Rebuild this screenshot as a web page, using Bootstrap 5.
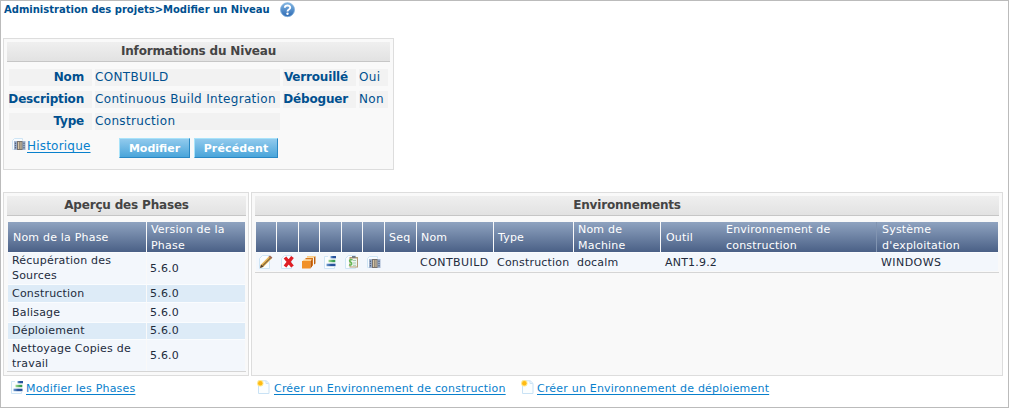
<!DOCTYPE html>
<html lang="fr">
<head>
<meta charset="utf-8">
<title>Administration des projets</title>
<link rel="stylesheet" href="https://cdn.jsdelivr.net/npm/bootstrap@5.3.0/dist/css/bootstrap.min.css">
<style>
body{font-family:Verdana,"DejaVu Sans",sans-serif;font-size:11px;line-height:15px;color:#222b3c;background:#fff;overflow:hidden}
.page{width:1009px;height:408px;border:1px solid #bbb;padding:0 5px 0 2px}
.crumb{height:37px;color:#00508f;font-weight:700;font-size:10px;line-height:17px;padding-left:1px}
.crumb svg{margin:1px 0 0 11px}
.c1{width:265px;white-space:nowrap}
.panel{background:#f9f9f9;border:1px solid #ddd;padding:3px}
.panel-title{height:20px;border-bottom:1px solid #c6c6c6;background:linear-gradient(#efefef,#e2e2e2);color:#444;font-size:12px;font-weight:700;line-height:18px;letter-spacing:-.18px;text-align:center;margin:0}
.info{width:391px;height:132px}
.fields{display:grid;grid-template-columns:83px 185px 73px 29px;column-gap:3px;row-gap:5px;margin:7px 0 0 2px;font-size:12px;line-height:16px;color:#00508f}
.fields>*{background:#f2f2f2;height:17px;margin:0;white-space:nowrap}
.fields dd{letter-spacing:.33px}
.fields dt{padding-right:8px;display:flex;justify-content:flex-end;letter-spacing:-.18px}
.actions{margin:8px 0 0 5px}
.lnk{color:#0880cc;text-decoration:underline;text-underline-offset:2px;white-space:nowrap;letter-spacing:.2px}
.hist{font-size:12px;width:92px;margin-left:1px;line-height:17px}
.btn-act{height:20px;border-radius:0;border:1px solid;border-color:#a9e3fa #2a88c4 #2a88c4 #a9e3fa;background:linear-gradient(#91caed,#4aa5da);color:#fff;font-size:11px;font-weight:700;line-height:17px;padding:0;text-align:center}
.b1{width:71px;margin-right:4px}
.b2{width:84px;letter-spacing:.15px}
.boxes{margin-top:22px;gap:2px;height:184px}
.phases{width:246px;padding-right:2px}
.envs{width:752px}
.grid-tbl{table-layout:fixed;border-collapse:separate;border-spacing:0;margin:6px 1px 0;letter-spacing:.2px}
.pt{width:237px}
.et{width:742px}
.grid-tbl th{font-weight:400;color:#fff;height:30px;line-height:16px;padding:2px 0 0 4px;background:linear-gradient(#8fa3c0,#4a6086);border-right:1px solid #f9f9f9;white-space:nowrap;vertical-align:middle}
.grid-tbl th div{margin:-2px 0}
.grid-tbl td{padding:0 0 0 3px;background:#f3f7fc;border-right:1px solid #f9f9f9;border-top:1px solid #fafcfe;white-space:nowrap;vertical-align:middle}
.grid-tbl th.pad{padding-left:5px}
.grid-tbl td.pad{padding-left:4px}
.grid-tbl th:last-child,.grid-tbl td:last-child{border-right:0}
.grid-tbl .alt td{background:#ddebf7}
.grid-tbl th.open{border-right:0}
.grid-tbl th.faint{border-right-color:#8194b1}
.grid-tbl .plain td{border-right-color:#f3f7fc;border-bottom:1px solid #f9f9f9}
.caps{letter-spacing:.45px}
.up{position:relative;top:-1px}
.rule{height:1px;background:#d5d5d5}
.foot{padding:4px 0 0 8px;line-height:17px}
.foot .lnk{padding-top:0}
.l1{width:231px;margin-left:1px}
.l2{width:247px;margin-left:3px}
.l3{margin-left:2px}
svg{display:block;flex:none}
</style>
</head>
<body>
<svg width="0" height="0" class="position-absolute" aria-hidden="true"><defs>
<linearGradient id="gb" x2="0" y2="1"><stop stop-color="#80b6e4"/><stop offset="1" stop-color="#2d69b3"/></linearGradient>
<linearGradient id="gk" x2="1" y2="0"><stop stop-color="#6f9dd0"/><stop offset=".5" stop-color="#28539c"/></linearGradient>
<linearGradient id="gg" x2="1" y2="0"><stop stop-color="#a5dc92"/><stop offset=".7" stop-color="#3a9e55"/></linearGradient>
<symbol id="sheet" viewBox="0 0 14 14"><path d="M3.500.5h7v13H.5v-10z" fill="#fafdff" stroke="#cfe5f5"/></symbol>
<symbol id="film" viewBox="0 0 14 14"><path d="M.5 11.500V2.500l2-2h8v2M.5 11.500H3" fill="#f8fcff" stroke="#cfe5f5"/><path d="M2 3h11.500v9H2z" fill="#a3b5d0"/><path d="M3.500 4.500v6M12 4.500v6" stroke="#56657f" stroke-width="1.300" stroke-dasharray="1.500 .7"/><path d="M5 3h5.500v9H5z" fill="#77726e"/><path d="M6 4h1.300v7H6zM8.400 4h1.100v7H8.400z" fill="#d8c6a5"/></symbol>
<symbol id="steps" viewBox="0 0 14 14"><path d="M4 1.500H.5v12h10V12" fill="#fafdff" stroke="#cfe5f5"/><path d="M6.500 1h5.500v2.300H6.500z" fill="url(#gk)"/><path d="M4.500 4.800h6.800v2.400H4.500z" fill="url(#gg)"/><path d="M2.500 8.700h9V11.200h-9z" fill="url(#gk)"/></symbol>
<symbol id="newdoc" viewBox="0 0 14 14"><path d="M1.500.8h7.800l2.700 2.600v10.100H1.500z" fill="#fbfeff" stroke="#c9e2f5"/><path d="M9 1v2.500h2.700" fill="none" stroke="#c9e2f5"/><circle cx="3.300" cy="3.300" r="3.200" fill="#ffe88a"/><circle cx="3.300" cy="3.300" r="2.200" fill="#ffba14"/></symbol>
</defs></svg>
<main class="page">
  <div class="crumb d-flex"><span class="c1">Administration des projets&gt;Modifier un Niveau</span>
    <svg width="15" height="16" viewBox="0 0 15 16"><circle cx="7.500" cy="7.700" r="7" fill="url(#gb)" stroke="#7daedb" stroke-width=".8"/><path d="M4.800 5.800C5 2.700 10.200 2.700 10.200 5.700 10.200 7.500 7.500 7.500 7.500 9.400" fill="none" stroke="#fff" stroke-width="1.900"/><circle cx="7.500" cy="11.800" r="1.200" fill="#fff"/></svg>
  </div>
  <section class="panel info">
    <h1 class="panel-title">Informations du Niveau</h1>
    <dl class="fields mb-0">
      <dt>Nom</dt><dd>CONTBUILD</dd><dt>Verrouillé</dt><dd>Oui</dd>
      <dt>Description</dt><dd>Continuous Build Integration</dd><dt>Déboguer</dt><dd>Non</dd>
      <dt>Type</dt><dd>Construction</dd>
    </dl>
    <div class="actions d-flex">
      <svg width="14" height="14"><use href="#film"/></svg>
      <a href="#" class="lnk hist">Historique</a>
      <button class="btn btn-act b1">Modifier</button><button class="btn btn-act b2">Précédent</button>
    </div>
  </section>
  <div class="d-flex boxes">
    <section class="panel phases">
      <h2 class="panel-title">Aperçu des Phases</h2>
      <table class="grid-tbl pt">
        <colgroup><col style="width:139px"><col style="width:98px"></colgroup>
        <tr><th class="pad">Nom de la Phase</th><th><div>Version de la<br>Phase</div></th></tr>
        <tr style="height:32px"><td class="pad"><div class="up">Récupération des<br>Sources</div></td><td>5.6.0</td></tr>
        <tr class="alt" style="height:18px"><td class="pad">Construction</td><td>5.6.0</td></tr>
        <tr style="height:20px"><td class="pad">Balisage</td><td>5.6.0</td></tr>
        <tr class="alt" style="height:17px"><td class="pad"><div class="up">Déploiement</div></td><td><div class="up">5.6.0</div></td></tr>
        <tr style="height:32px"><td class="pad">Nettoyage Copies de<br>travail</td><td>5.6.0</td></tr>
      </table>
      <div class="rule"></div>
    </section>
    <section class="panel envs">
      <h2 class="panel-title">Environnements</h2>
      <table class="grid-tbl et">
        <colgroup><col style="width:21px"><col style="width:22px"><col style="width:21px"><col style="width:22px"><col style="width:21px"><col style="width:22px"><col style="width:32px"><col style="width:77px"><col style="width:80px"><col style="width:87px"><col style="width:60px"><col style="width:156px"><col style="width:121px"></colgroup>
        <tr><th></th><th></th><th></th><th></th><th></th><th></th><th>Seq</th><th>Nom</th><th>Type</th><th><div>Nom de<br>Machine</div></th><th class="open pad">Outil</th><th class="faint pad"><div>Environnement de<br>construction</div></th><th class="pad"><div>Système<br>d'exploitation</div></th></tr>
        <tr class="plain" style="height:20px">
          <td><svg width="14" height="14" viewBox="0 0 14 14"><use href="#sheet"/><path d="M1 13l1-3.600L9.800 1.500l2.700 2.300L4.600 11.700z" fill="#e8b85a"/><path d="M3.600 10.800L11.500 3" stroke="#8a6a3a" stroke-width="1.200"/><path d="M9.500 1.800L11 .6l2.400 2-1.200 1.500z" fill="#a36a52"/><path d="M1 13l1-3.600 2.600 2.300z" fill="#514232"/></svg></td>
          <td class="pad"><svg width="14" height="14" viewBox="0 0 14 14"><use href="#sheet"/><path d="M4 2.500l7.500 9M11.500 2L4 11.500" stroke="#df1f26" stroke-width="3.400"/></svg></td>
          <td><svg width="14" height="14" viewBox="0 0 14 14"><path d="M5 1h8.500v7.500l-1.500 1V2.500H5z" fill="#f7c276"/><path d="M3.500 3H11v7.500l-1.500 1V4.500h-6z" fill="#d9771a"/><path d="M4.500 2.500l1-1h7.500l-1 1z" fill="#ffd794"/><path d="M12 2.500l1.300-1v7l-1.300 1z" fill="#b95f16"/><path d="M0 6.500l2-2h7.500l-1 2z" fill="#ffd18a"/><path d="M0 6h8.500v7.500H0z" fill="#f19128"/><path d="M8.500 6.500l1.500-2v7l-1.500 2z" fill="#b9590b"/></svg></td>
          <td class="pad"><svg width="14" height="14"><use href="#steps"/></svg></td>
          <td><svg width="14" height="14" viewBox="0 0 14 14"><use href="#sheet"/><path d="M4.500 2h8.500v10.500H4.500z" fill="#b39b72"/><path d="M5.500 3.500H12v8H5.500z" fill="#eef5f0"/><path d="M7 1h3.500v2H7z" fill="#777b83"/><path d="M8 5.500h3M8 8h3M8 10.300h3" stroke="#a8cdb0"/><path d="M7.500 5C5 3.700 3.500 6 5.500 7S7 11 4 9.800" fill="none" stroke="#65bb56" stroke-width="1.500"/></svg></td>
          <td class="pad"><svg width="14" height="14" style="margin-top:2px"><use href="#film"/></svg></td>
          <td></td><td class="caps">CONTBUILD</td><td>Construction</td><td>docalm</td><td class="pad">ANT1.9.2</td><td></td><td class="pad caps">WINDOWS</td>
        </tr>
      </table>
      <div class="rule"></div>
    </section>
  </div>
  <nav class="foot d-flex">
    <svg width="14" height="14"><use href="#steps"/></svg><a href="#" class="lnk l1">Modifier les Phases</a>
    <svg width="14" height="14"><use href="#newdoc"/></svg><a href="#" class="lnk l2">Créer un Environnement de construction</a>
    <svg width="14" height="14"><use href="#newdoc"/></svg><a href="#" class="lnk l3">Créer un Environnement de déploiement</a>
  </nav>
</main>
<script src="https://cdn.jsdelivr.net/npm/bootstrap@5.3.0/dist/js/bootstrap.bundle.min.js"></script>
</body>
</html>
